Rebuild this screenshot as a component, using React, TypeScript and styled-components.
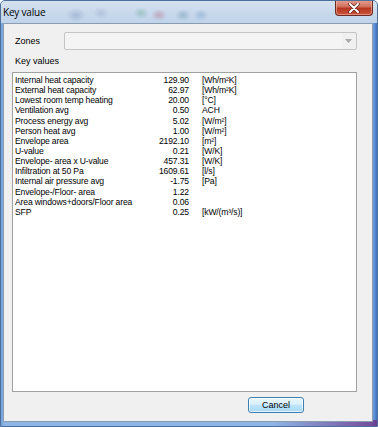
import React from "react";
import styled, { createGlobalStyle } from "styled-components";

const Global = createGlobalStyle`
  html, body { margin: 0; padding: 0; background: #ffffff; }
  body { font-family: "Liberation Sans", Arial, sans-serif; }
`;

const Window = styled.div`
  width: 378px;
  height: 427px;
  box-sizing: border-box;
  display: flex;
  flex-direction: column;
  border: 1px solid #4d6f9c;
  border-radius: 5px 5px 0 0;
  background:
    linear-gradient(to right, rgba(90, 110, 200, 0) 0%, rgba(90, 110, 200, 0) 72%, rgba(112, 52, 138, 0.85) 100%) bottom / 100% 6px no-repeat,
    linear-gradient(to right, #6f9fdc 0px, #8eb6e6 3px, #8eb6e6 370px, #4a7ccb 375px, #2e5aa6 378px),
    #7aa5dc;
  overflow: hidden;
`;

const TitleBar = styled.div`
  height: 22px;
  flex: none;
  display: flex;
  align-items: flex-start;
  justify-content: space-between;
  padding-left: 2px;
  background:
    radial-gradient(ellipse 10px 7px at 75px 14px, rgba(90, 120, 160, 0.3), transparent),
    radial-gradient(ellipse 8px 6px at 100px 12px, rgba(110, 130, 170, 0.25), transparent),
    radial-gradient(ellipse 8px 6px at 140px 12px, rgba(60, 150, 110, 0.3), transparent),
    radial-gradient(ellipse 8px 6px at 158px 14px, rgba(170, 60, 90, 0.3), transparent),
    radial-gradient(ellipse 8px 6px at 182px 14px, rgba(60, 110, 140, 0.3), transparent),
    radial-gradient(ellipse 8px 6px at 200px 14px, rgba(60, 110, 170, 0.25), transparent),
    linear-gradient(to bottom, #d5e1ef 0%, #c7d8ec 60%, #bfd3ea 100%);
`;

const Title = styled.span`
  margin-top: 5px;
  font-family: "Open Sans", "Noto Sans", sans-serif;
  font-size: 10px;
  letter-spacing: -0.2px;
  color: #000000;
  line-height: 13px;
`;

const CloseButton = styled.div`
  width: 38px;
  height: 16px;
  margin-right: 4px;
  margin-top: -1px;
  box-sizing: border-box;
  border: 1px solid #6b2a22;
  border-top: none;
  border-radius: 0 0 4px 4px;
  background: linear-gradient(to bottom, #e8a192 0%, #d0705d 45%, #b8361f 55%, #c9543c 100%);
  display: flex;
  align-items: center;
  justify-content: center;
  box-shadow: inset 0 0 0 1px rgba(255, 200, 190, 0.5);
`;

const Client = styled.div`
  flex: 1;
  margin: 0 4px 4px 2px;
  border: 1px solid #8a9cb2;
  background: #f0f0f0;
  display: flex;
  flex-direction: column;
  padding: 8px 15px 8px 8px;
  min-height: 0;
`;

const ZonesRow = styled.div`
  display: flex;
  align-items: center;
  height: 18px;
`;

const Label = styled.span`
  font-size: 9px;
  color: #000000;
  margin-left: 3px;
`;

const ZonesLabel = styled(Label)`
  width: 49px;
  flex: none;
`;

const Combo = styled.div`
  flex: 1;
  height: 18px;
  box-sizing: border-box;
  border: 1px solid #c4c4c4;
  border-radius: 2px;
  background: linear-gradient(to right, #f4f4f4 0, #f4f4f4 calc(100% - 14px), #f0f0f0 calc(100% - 14px));
  display: flex;
  align-items: center;
  justify-content: flex-end;
  padding-right: 4px;
`;

const SectionLabel = styled(Label)`
  display: block;
  line-height: 11px;
  margin-top: 6px;
  margin-bottom: 5px;
`;

const ListBox = styled.div`
  flex: 1;
  min-height: 0;
  box-sizing: border-box;
  border: 1px solid #a0a0a0;
  background: #ffffff;
  padding: 2px 0 0 2px;
`;

const Row = styled.div`
  display: grid;
  grid-template-columns: 121px 40px 160px;
  column-gap: 13px;
  height: 10.15px;
  line-height: 10.15px;
  font-size: 8.6px;
  letter-spacing: -0.15px;
  color: #000000;
  white-space: nowrap;
`;

const Value = styled.span`
  text-align: right;
`;

const Footer = styled.div`
  display: flex;
  justify-content: flex-end;
  margin-top: 5px;
  padding-right: 53px;
`;

const Button = styled.button`
  width: 56px;
  height: 16px;
  box-sizing: border-box;
  padding: 0;
  border: 1px solid #3c7fb1;
  border-radius: 3px;
  background: linear-gradient(to bottom, #eaf6fd 0%, #d9f0fc 45%, #bee6fd 50%, #a7d9f5 100%);
  box-shadow: inset 0 0 0 1px rgba(255, 255, 255, 0.7);
  font-family: "Liberation Sans", Arial, sans-serif;
  font-size: 9px;
  color: #000000;
  line-height: 14px;
`;

const rows: [string, string, string][] = [
  ["Internal heat capacity", "129.90", "[Wh/m²K]"],
  ["External heat capacity", "62.97", "[Wh/m²K]"],
  ["Lowest room temp heating", "20.00", "[°C]"],
  ["Ventilation avg", "0.50", "ACH"],
  ["Process energy avg", "5.02", "[W/m²]"],
  ["Person heat avg", "1.00", "[W/m²]"],
  ["Envelope area", "2192.10", "[m²]"],
  ["U-value", "0.21", "[W/K]"],
  ["Envelope- area x U-value", "457.31", "[W/K]"],
  ["Infiltration at 50 Pa", "1609.61", "[l/s]"],
  ["Internal air pressure avg", "-1.75", "[Pa]"],
  ["Envelope-/Floor- area", "1.22", ""],
  ["Area windows+doors/Floor area", "0.06", ""],
  ["SFP", "0.25", "[kW/(m³/s)]"],
];

export default function App() {
  return (
    <>
      <Global />
      <Window>
        <TitleBar>
          <Title>Key value</Title>
          <CloseButton>
            <svg width="12" height="10" viewBox="0 0 12 10">
              <path d="M2 1 L10 9 M10 1 L2 9" stroke="#5a1f18" strokeWidth="3.4" strokeLinecap="round" />
              <path d="M2 1 L10 9 M10 1 L2 9" stroke="#ffffff" strokeWidth="2" strokeLinecap="round" />
            </svg>
          </CloseButton>
        </TitleBar>
        <Client>
          <ZonesRow>
            <ZonesLabel>Zones</ZonesLabel>
            <Combo>
              <svg width="7" height="4" viewBox="0 0 7 4">
                <path d="M0 0 L7 0 L3.5 4 Z" fill="#a8a8a8" />
              </svg>
            </Combo>
          </ZonesRow>
          <SectionLabel>Key values</SectionLabel>
          <ListBox>
            {rows.map(([name, value, unit]) => (
              <Row key={name}>
                <span>{name}</span>
                <Value>{value}</Value>
                <span>{unit}</span>
              </Row>
            ))}
          </ListBox>
          <Footer>
            <Button>Cancel</Button>
          </Footer>
        </Client>
      </Window>
    </>
  );
}
